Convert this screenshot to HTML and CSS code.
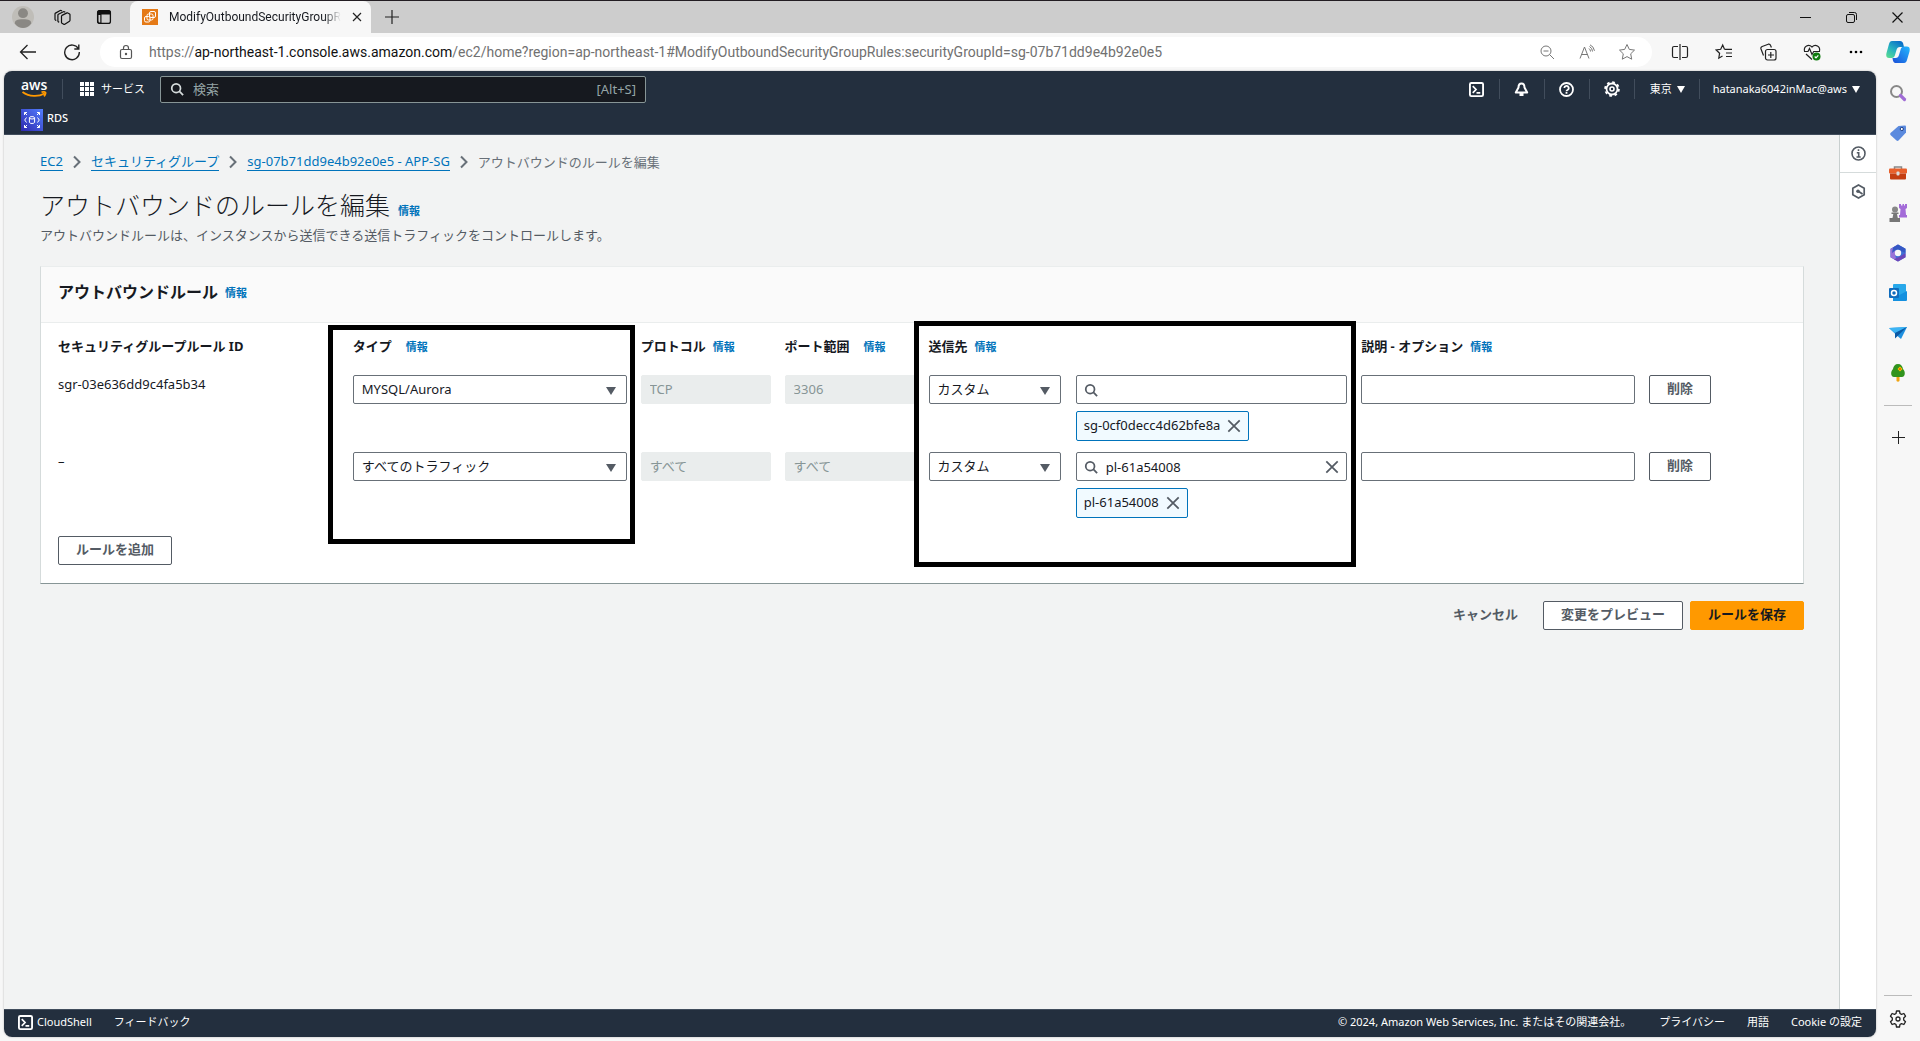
FILE: index.html
```html
<!DOCTYPE html>
<html lang="ja">
<head>
<meta charset="utf-8">
<title>ModifyOutboundSecurityGroupRules</title>
<link rel="stylesheet" href="styles.css">
</head>
<body>
<svg class="defs" aria-hidden="true">
  <symbol id="close" viewBox="0 0 16 16"><path d="M1.500 1.500l13 13M14.500 1.500l-13 13" fill="none" stroke="currentColor" stroke-width="2"/></symbol>
  <symbol id="search" viewBox="0 0 16 16"><circle cx="7" cy="7" r="5" fill="none" stroke="currentColor" stroke-width="2"/><path d="M10.500 10.500L15 15" stroke="currentColor" stroke-width="2"/></symbol>
  <symbol id="shell" viewBox="0 0 16 16"><rect x="1" y="1" width="14" height="14" rx="1.500" fill="none" stroke="currentColor" stroke-width="2"/><path d="M4 4.500l3.500 3.500L4 11.500M8 11.500h4" fill="none" stroke="currentColor" stroke-width="1.800"/></symbol>
  <symbol id="chevron" viewBox="0 0 10 14"><path d="M2 1.500L7.500 7 2 12.500" fill="none" stroke="currentColor" stroke-width="2"/></symbol>
</svg>
<div class="browser">
  <header class="tabstrip">
    <button class="ib avatar" aria-label="プロファイル"><svg width="22" height="22" viewBox="0 0 20 20"><circle cx="10" cy="10" r="10" fill="#bfbdb8"/><circle cx="10" cy="6.500" r="4.500" fill="#8a8884"/><path d="M2.500 16c0-3 2-4 7.500-4s7.500 1 7.500 4c-2 3-5 4-7.500 4s-5.500-1-7.500-4z" fill="#8a8884"/></svg></button>
    <button class="ib" aria-label="ワークスペース"><svg width="17" height="17" viewBox="0 0 17 17" fill="none" stroke="#111" stroke-width="1.200" stroke-linejoin="round"><path d="M7.500 7.300q0-.6.500-.9l5-2.500q.5-.2.900.1l1.700 1q.4.300.4.800v5.500q0 .6-.5.900l-4.700 3.100q-.6.300-1.100 0l-1.700-1q-.5-.3-.5-.9z"/><path d="M5.200 13.300l-.8-.4q-.5-.3-.5-.9V6.200q0-.6.500-.9l5-2.600q.5-.2.900 0l1 .6"/><path d="M2.300 11.500l-.8-.4q-.5-.3-.5-.9V5q0-.6.500-.9l4.700-2.600q.5-.2.900 0l1 .5"/></svg></button>
    <button class="ib" aria-label="タブ操作"><svg width="16" height="16" viewBox="0 0 16 16"><rect x="1.600" y="1.600" width="12.800" height="12.800" rx="2" fill="none" stroke="#111" stroke-width="1.300"/><path d="M1 4a3 3 0 0 1 3-3h8a3 3 0 0 1 3 3v1.500H5.500V15H4a3 3 0 0 1-3-3z" fill="#111"/><path d="M2.500 6h1.800v7.500H4a1.500 1.500 0 0 1-1.500-1.500z" fill="#ccc"/></svg></button>
    <div class="tab">
      <svg width="16" height="16" viewBox="0 0 16 16"><rect width="16" height="16" fill="#e57a17"/><g fill="none" stroke="#fff"><rect x="7.500" y="2.500" width="6" height="6" rx="1.500"/><rect x="5" y="5" width="6" height="6" rx="1.500"/><rect x="2.500" y="7.500" width="5.500" height="5.500" rx="1.500"/></g></svg>
      <span class="tab-title">ModifyOutboundSecurityGroupR</span>
      <button class="ib" aria-label="タブを閉じる"><svg width="10" height="10" viewBox="0 0 10 10"><path d="M1 1l8 8M9 1L1 9" stroke="#222" stroke-width="1.200"/></svg></button>
    </div>
    <button class="ib newtab" aria-label="新しいタブ"><svg width="14" height="14" viewBox="0 0 14 14"><path d="M7 0v14M0 7h14" stroke="#222" stroke-width="1.200"/></svg></button>
    <div class="winctl">
      <button class="ib" aria-label="最小化"><svg width="11" height="11" viewBox="0 0 11 11"><path d="M0 5.500h11" stroke="#111"/></svg></button>
      <button class="ib" aria-label="元に戻す"><svg width="11" height="11" viewBox="0 0 11 11" fill="none" stroke="#111"><rect x=".5" y="2.500" width="8" height="8" rx="1.500"/><path d="M3 .5h5.500a2 2 0 0 1 2 2V8"/></svg></button>
      <button class="ib" aria-label="閉じる"><svg width="11" height="11" viewBox="0 0 11 11"><path d="M.5.5l10 10M10.500.5l-10 10" stroke="#111" stroke-width="1.200"/></svg></button>
    </div>
  </header>
  <div class="toolbar">
    <button class="ib" aria-label="戻る"><svg width="18" height="16" viewBox="0 0 18 16"><path d="M17 8H1.500M8.500 1l-7 7 7 7" fill="none" stroke="#222" stroke-width="1.300"/></svg></button>
    <button class="ib" aria-label="更新"><svg width="18" height="18" viewBox="0 0 18 18" fill="none" stroke="#222" stroke-width="1.400"><path d="M15.500 6A7.300 7.300 0 1 0 16.300 9M15.800 1.500V6h-4.500"/></svg></button>
    <div class="address">
      <svg width="14" height="16" viewBox="0 0 14 16" fill="none" stroke="#555" stroke-width="1.200"><rect x="1.500" y="5.500" width="11" height="9" rx="1.500"/><path d="M4.500 5.500V4a2.500 2.500 0 0 1 5 0v1.500"/><circle cx="7" cy="10" r=".6" fill="#555"/></svg>
      <p class="url">https://<b>ap-northeast-1.console.aws.amazon.com</b>/ec2/home?region=ap-northeast-1#ModifyOutboundSecurityGroupRules:securityGroupId=sg-07b71dd9e4b92e0e5</p>
      <button class="ib" aria-label="縮小"><svg width="16" height="16" viewBox="0 0 16 16" fill="none" stroke="#777"><circle cx="7" cy="7" r="5"/><path d="M10.500 10.500l4.500 4.500M4.500 7h5" /></svg></button>
      <button class="ib" aria-label="音声で読み上げる"><svg width="17" height="16" viewBox="0 0 17 16" fill="none" stroke="#777"><path d="M1 14.500L5.500 3 10 14.500M2.500 10.500h6M10 4.500a4 4 0 0 1 1.500 3M10.500 2.500a6 6 0 0 1 3 5M11 .8a8 8 0 0 1 4.500 6"/></svg></button>
      <button class="ib" aria-label="お気に入りに追加"><svg width="18" height="18" viewBox="0 0 18 18" fill="none" stroke="#777"><path d="M9 1.500l2.300 4.900 5.200.7-3.800 3.700 1 5.400L9 13.600l-4.700 2.600 1-5.400L1.500 7.100l5.200-.7z"/></svg></button>
    </div>
    <div class="tools">
      <button class="ib" aria-label="画面を分割"><svg width="18" height="18" viewBox="0 0 18 18" fill="none" stroke="#222" stroke-width="1.200"><path d="M9 1v16M7 3.500H3a1.500 1.500 0 0 0-1.500 1.500v8A1.500 1.500 0 0 0 3 14.500h4M11 3.500h4a1.500 1.500 0 0 1 1.500 1.500v8a1.500 1.500 0 0 1-1.500 1.500h-4"/></svg></button>
      <button class="ib" aria-label="お気に入り"><svg width="18" height="18" viewBox="0 0 18 18" fill="none" stroke="#222" stroke-width="1.200"><path d="M9.500 6.300L7.700 2 5.700 6.300l-4.500.7 3.400 3.200-.8 5 3.700-2.200M9.500 6.300h7.500M11 10h6M11 13.500h6"/></svg></button>
      <button class="ib" aria-label="コレクション"><svg width="18" height="18" viewBox="0 0 18 18" fill="none" stroke="#222" stroke-width="1.200"><rect x="6.500" y="6.500" width="10.500" height="10.500" rx="2"/><path d="M11.800 9v6M9 12h6M4.500 12.500L2 6a2 2 0 0 1 1.200-2.500l6-2.300A2 2 0 0 1 11.600 2.500l.8 2"/></svg></button>
      <button class="ib" aria-label="ブラウザーのエッセンシャル"><svg width="18" height="18" viewBox="0 0 18 18" fill="none" stroke="#222" stroke-width="1.200"><path d="M1.500 8C.5 3.500 5.500.5 9 4c3.500-3.500 8.500-.5 7.500 4M1 8.500h4l1.500-3 2.500 6 1.700-3H17M3 11l6 5.500"/><circle cx="13.500" cy="13.500" r="4" fill="#107c10" stroke="none"/><path d="M11.700 13.500l1.300 1.300 2.300-2.500" stroke="#fff"/></svg></button>
      <button class="ib" aria-label="設定など"><svg width="14" height="4" viewBox="0 0 14 4"><circle cx="2" cy="2" r="1.300"/><circle cx="7" cy="2" r="1.300"/><circle cx="12" cy="2" r="1.300"/></svg></button>
    </div>
    <button class="ib copilot" aria-label="Copilot"><svg width="24" height="24" viewBox="0 0 24 24"><defs><linearGradient id="ca" x1="0" y1="1" x2=".7" y2="0"><stop stop-color="#5fe08b"/><stop offset=".5" stop-color="#27b3c0"/><stop offset="1" stop-color="#0a70c8"/></linearGradient><linearGradient id="cb" x1="0" y1="1" x2="1" y2="0"><stop stop-color="#1b4fd8"/><stop offset="1" stop-color="#22b8ff"/></linearGradient></defs><path d="M6 1h8c2 0 3 1 3.500 4l.5 2h-4c-2 0-3 1-3.500 3l-1.500 5c-.5 2-1.500 3-3.500 3H3c-3 0-3-3-2.500-5L3 4c.5-2 1.500-3 3-3z" fill="url(#ca)"/><path d="M18 23h-8c-2 0-3-1-3.500-5h3c2 0 3-1 3.500-3l1.500-5c.5-2 1.500-3.500 3.500-3.500h3c3 0 3 3 2.500 5L21 20c-.5 2-1.500 3-3 3z" fill="url(#cb)"/></svg></button>
  </div>
  <div class="body">
    <div class="frame">
      <header class="awsnav">
        <div class="navrow">
          <a class="logo" href="#" aria-label="AWS"><span>aws</span><svg width="27" height="7" viewBox="0 0 26 7" fill="none" stroke="#ff9900" stroke-width="1.800"><path d="M1 1c7 5 16 5 22 1.500M20 1.200c3-.7 4.500-.2 4 1.300-.2 1.200-.8 2-1.500 2.800"/></svg></a>
          <button class="services"><svg width="14" height="14" viewBox="0 0 14 14" fill="#fff"><path d="M0 0h4v4H0zM5 0h4v4H5zM10 0h4v4h-4zM0 5h4v4H0zM5 5h4v4H5zM10 5h4v4h-4zM0 10h4v4H0zM5 10h4v4H5zM10 10h4v4h-4z"/></svg>サービス</button>
          <label class="navsearch"><svg width="14" height="14"><use href="#search"/></svg><input type="text" placeholder="検索" aria-label="検索"><span>[Alt+S]</span></label>
          <div class="navright">
            <button class="ni" aria-label="CloudShell"><svg width="15" height="15"><use href="#shell"/></svg></button>
            <button class="ni" aria-label="通知"><svg width="15" height="15" viewBox="0 0 15 15" fill="none" stroke="#fff" stroke-width="2"><path d="M7.500 1.500c-2 0-3 1.500-3 4L1.800 10.500h11.400L10.500 5.500c0-2.500-1-4-3-4z" stroke-linejoin="round"/><path d="M5.500 12.500h4" stroke-width="3"/></svg></button>
            <button class="ni" aria-label="ヘルプ"><svg width="15" height="15" viewBox="0 0 15 15" fill="none" stroke="#fff" stroke-width="1.800"><circle cx="7.500" cy="7.500" r="6.500"/><path d="M5.300 6a2.200 2.200 0 1 1 3.200 2c-.7.400-1 .6-1 1.300M7.500 10v1.700"/></svg></button>
            <button class="ni" aria-label="設定"><svg width="16" height="16" viewBox="0 0 16 16" fill="none" stroke="#fff"><circle cx="8" cy="8" r="5.500" stroke-width="1.800"/><circle cx="8" cy="8" r="6.900" stroke-width="1.800" stroke-dasharray="2.700 2.720"/><circle cx="8" cy="8" r="2" stroke-width="1.600"/></svg></button>
            <button class="menu region">東京</button>
            <button class="menu user">hatanaka6042inMac@aws</button>
          </div>
        </div>
        <a class="rds" href="#"><svg width="22" height="22" viewBox="0 0 22 22"><defs><linearGradient id="rg" x1="0" y1="1" x2="1" y2="0"><stop stop-color="#2e27ad"/><stop offset="1" stop-color="#527fff"/></linearGradient></defs><rect width="22" height="22" fill="url(#rg)"/><g fill="none" stroke="#fff"><ellipse cx="11" cy="8.800" rx="2.600" ry="1.200"/><path d="M8.400 8.800v4.500c0 1.600 5.200 1.600 5.200 0V8.800M5.500 8.500l-1.800 2.500 1.800 2.500M16.500 8.500l1.800 2.500-1.800 2.500M3.500 6V3.500H6M3.500 3.500l2.500 2.500M18.500 6V3.500H16M18.500 3.500L16 6M3.500 16v2.500H6M3.500 18.500L6 16M18.500 16v2.500H16M18.500 18.500L16 16"/></g></svg><span>RDS</span></a>
      </header>
      <div class="page">
        <main>
          <nav class="crumbs"><a href="#">EC2</a><svg width="10" height="14"><use href="#chevron"/></svg><a href="#">セキュリティグループ</a><svg width="10" height="14"><use href="#chevron"/></svg><a href="#">sg-07b71dd9e4b92e0e5 - APP-SG</a><svg width="10" height="14"><use href="#chevron"/></svg><span>アウトバウンドのルールを編集</span></nav>
          <div class="title"><h1>アウトバウンドのルールを編集</h1><a class="info" href="#">情報</a></div>
          <p class="desc">アウトバウンドルールは、インスタンスから送信できる送信トラフィックをコントロールします。</p>
          <form class="card">
            <div class="cardhead"><h2>アウトバウンドルール</h2><a class="info" href="#">情報</a></div>
            <table class="rules">
              <thead>
                <tr>
                  <th>セキュリティグループルール ID</th>
                  <th class="wide marked mark-type">タイプ<a class="info" href="#">情報</a></th>
                  <th>プロトコル<a class="info" href="#">情報</a></th>
                  <th class="wide">ポート範囲<a class="info" href="#">情報</a></th>
                  <th class="marked mark-dest">送信先<a class="info" href="#">情報</a></th>
                  <th>説明 - オプション<a class="info" href="#">情報</a></th>
                  <th></th>
                </tr>
              </thead>
              <tbody>
                <tr>
                  <td class="id">sgr-03e636dd9c4fa5b34</td>
                  <td><span class="sel"><select aria-label="タイプ"><option>MYSQL/Aurora</option></select></span></td>
                  <td><input type="text" value="TCP" aria-label="プロトコル" disabled></td>
                  <td><input type="text" value="3306" aria-label="ポート範囲" disabled></td>
                  <td class="dest">
                    <span class="sel"><select aria-label="送信先"><option>カスタム</option></select></span>
                    <div class="pick">
                      <label class="find"><svg width="14" height="14"><use href="#search"/></svg><input type="text" aria-label="送信先を検索"></label>
                      <span class="token"><span>sg-0cf0decc4d62bfe8a</span><button type="button" class="ib" aria-label="削除"><svg width="14" height="14"><use href="#close"/></svg></button></span>
                    </div>
                  </td>
                  <td><input type="text" aria-label="説明"></td>
                  <td><button type="button" class="btn">削除</button></td>
                </tr>
                <tr>
                  <td class="id">–</td>
                  <td><span class="sel"><select aria-label="タイプ"><option>すべてのトラフィック</option></select></span></td>
                  <td><input type="text" value="すべて" aria-label="プロトコル" disabled></td>
                  <td><input type="text" value="すべて" aria-label="ポート範囲" disabled></td>
                  <td class="dest">
                    <span class="sel"><select aria-label="送信先"><option>カスタム</option></select></span>
                    <div class="pick">
                      <label class="find"><svg width="14" height="14"><use href="#search"/></svg><input type="text" value="pl-61a54008" aria-label="送信先を検索"><button type="button" class="ib" aria-label="クリア"><svg width="14" height="14"><use href="#close"/></svg></button></label>
                      <span class="token"><span>pl-61a54008</span><button type="button" class="ib" aria-label="削除"><svg width="14" height="14"><use href="#close"/></svg></button></span>
                    </div>
                  </td>
                  <td><input type="text" aria-label="説明"></td>
                  <td><button type="button" class="btn">削除</button></td>
                </tr>
              </tbody>
            </table>
            <button type="button" class="btn add">ルールを追加</button>
          </form>
          <div class="actions">
            <button class="btn link">キャンセル</button>
            <button class="btn">変更をプレビュー</button>
            <button class="btn primary">ルールを保存</button>
          </div>
        </main>
        <aside class="panel">
          <button class="ib" aria-label="情報パネル"><svg width="15" height="15" viewBox="0 0 15 15" fill="none" stroke="#545b64" stroke-width="1.600"><circle cx="7.500" cy="7.500" r="6.500"/><path d="M7.500 3.200v1.800M5.800 6.800h1.900v4M5.500 11h4.200"/></svg></button>
          <button class="ib" aria-label="診断"><svg width="15" height="15" viewBox="0 0 15 15" fill="none" stroke="#545b64" stroke-width="1.700"><path d="M7.500 1l5.700 3.200v6.600L7.500 14l-5.700-3.200V4.200z"/><circle cx="7" cy="7.200" r="1.800" fill="#545b64" stroke="none"/><path d="M7 7l4.500 3"/></svg></button>
        </aside>
      </div>
      <footer class="awsfoot">
        <a class="cs" href="#"><svg width="15" height="15"><use href="#shell"/></svg><span>CloudShell</span></a>
        <a href="#">フィードバック</a>
        <span class="copy">© 2024, Amazon Web Services, Inc. またはその関連会社。</span>
        <a href="#">プライバシー</a>
        <a href="#">用語</a>
        <a href="#">Cookie の設定</a>
      </footer>
    </div>
    <aside class="edge">
      <button class="ib" aria-label="検索"><svg width="18" height="18" viewBox="0 0 18 18"><circle cx="7.500" cy="7.500" r="5.500" fill="none" stroke="#888" stroke-width="2"/><path d="M11.500 11.500l4 4" stroke="#a06cd5" stroke-width="3.200" stroke-linecap="round"/></svg></button>
      <button class="ib" aria-label="ショッピング"><svg width="18" height="18" viewBox="0 0 18 18"><path d="M9.500 2L16 1.500q1 0 1 1V8.500l-7.500 8q-1 .8-2 0L1.500 11q-.8-1 0-2z" fill="#5b8ade"/><circle cx="12.800" cy="5" r="1.600" fill="#fff" stroke="#1d3f87"/></svg></button>
      <button class="ib" aria-label="ツール"><svg width="18" height="18" viewBox="0 0 18 18"><path d="M5.500 5V3h7v2" fill="none" stroke="#888" stroke-width="1.500"/><rect x="0" y="4.500" width="18" height="5" rx="1" fill="#e8602c"/><path d="M1 9.500h16v5q0 1-1 1H2q-1 0-1-1z" fill="#c43e12"/><rect x="7.500" y="7.500" width="3" height="4" rx="1" fill="#ddd"/></svg></button>
      <button class="ib" aria-label="ゲーム"><svg width="18" height="18" viewBox="0 0 18 18"><path d="M10 0h2v1.500h1.500V0h1.500v1.500h1V0h2v4l-1.500 1 .5 6h1v2.500h-8V11h1l.5-6L10 4z" fill="#a36bd8"/><circle cx="6" cy="5.500" r="3" fill="#888"/><path d="M2.500 8.500h7v1.500H8l.8 4h2.200v4H.5v-4h3l.8-4H2.500z" fill="#777"/></svg></button>
      <button class="ib" aria-label="Microsoft 365"><svg width="18" height="18" viewBox="0 0 18 18"><path d="M9 .5l7.500 4.300v8.400L9 17.500l-7.500-4.300V4.800z" fill="#3f6fd6"/><path d="M1.500 5L9 .5 6.500 6v7L9 17.500l-7.500-4.300z" fill="#9a72d8"/><path d="M9 .5L4 3.500 3 9l5-4 8.500 4V4.800z" fill="#3558c4"/><path d="M16.500 9v4.200L9 17.500l-4-2.300L12 12z" fill="#6c46b8"/><circle cx="9" cy="9" r="3.200" fill="#f7f7f7"/></svg></button>
      <button class="ib" aria-label="Outlook"><svg width="18" height="18" viewBox="0 0 18 18"><rect x="4" y="0" width="13" height="11" rx="1" fill="#28a8ea"/><path d="M4 17V7l6.500 4L18 7v9q0 1-1 1z" fill="#1490df"/><rect x="0" y="4" width="10" height="10" rx="1" fill="#0f6cbd"/><circle cx="5" cy="9" r="2.500" fill="none" stroke="#fff" stroke-width="1.500"/></svg></button>
      <button class="ib" aria-label="送信"><svg width="18" height="18" viewBox="0 0 18 18"><path d="M0 4l18-1-6 12-3.500-3z" fill="#1e90e0"/><path d="M0 4l18-1L6 9z" fill="#3cb4f4"/><path d="M18 3L6 9v5.500z" fill="#0c59a4"/></svg></button>
      <button class="ib" aria-label="ツリー"><svg width="18" height="18" viewBox="0 0 18 18"><path d="M7.500 12h3v5q-1.500 1.500-3 0z" fill="#f0a412"/><path d="M9 0c3 0 4.500 2 5 5 3 3 2 8-1 8H5c-3 0-4-5-1-8 .5-3 2-5 5-5z" fill="#31941e"/><path d="M11 2.500l2.500 2.500L11 7.500 8.500 5z" fill="#ffc400"/><circle cx="11" cy="5" r="1" fill="#e05a00"/></svg></button>
      <hr>
      <button class="ib" aria-label="追加"><svg width="13" height="13" viewBox="0 0 13 13"><path d="M6.500 0v13M0 6.500h13" stroke="#222"/></svg></button>
      <hr class="low">
      <button class="ib" aria-label="設定"><svg width="18" height="18" viewBox="0 0 18 18" fill="none" stroke="#222" stroke-width="1.300" stroke-linejoin="round"><path d="M7.500 1h3l.5 2.500 1.500.9 2.400-.9 1.600 2.700L14.700 8v2l1.800 1.700-1.600 2.800-2.400-.9-1.500.9-.5 2.500h-3L7 14.500l-1.500-.9-2.400.9-1.600-2.800L3.300 10V8L1.500 6.200l1.600-2.700 2.400.9L7 3.500z"/><circle cx="9" cy="9" r="2"/></svg></button>
    </aside>
  </div>
</div>
</body>
</html>
```
FILE: styles.css
```css
*, *::before, *::after { box-sizing: border-box; }
body { margin: 0; background: #f7f7f7; color: #16191f; font: 13px/18px "Noto Sans", "Noto Sans CJK JP", sans-serif; }
h1, h2, p { margin: 0; }
button, input, select { font: inherit; color: inherit; }
button { border: 0; background: none; padding: 0; cursor: pointer; }
a { color: #0073bb; text-decoration: none; }
svg { display: block; flex: none; }
.defs { position: absolute; width: 0; height: 0; }
.ib { display: flex; align-items: center; justify-content: center; flex: none; }
.browser { min-height: 100vh; display: flex; flex-direction: column; }

/* browser chrome */
.tabstrip { height: 33px; display: flex; align-items: center; background: #cdcdcd; border-top: 1px solid #221d22; }
.tabstrip > .ib { width: 42px; }
.tabstrip > .avatar { width: 41px; padding-left: 4px; }
.tabstrip .tab { width: 241px; height: 32px; margin-left: 5px; padding: 0 10px 0 12px; display: flex; align-items: center; gap: 11px; background: #f7f7f7; border-radius: 8px 8px 0 0; }
.tab-title { flex: 1; white-space: nowrap; font-family: Roboto, sans-serif; font-size: 12px; mask-image: linear-gradient(90deg, #000 90%, transparent); }
.tab .ib { width: 10px; }
.winctl { margin-left: auto; display: flex; }
.winctl .ib { width: 46px; height: 32px; }
.toolbar { height: 38px; display: flex; align-items: center; padding: 0 10px 0 6px; }
.toolbar > .ib { width: 44px; }
.toolbar > .copilot { width: 24px; margin-left: 8px; }
.address { flex: 1; height: 30px; margin-left: 6px; padding: 0 13px 0 19px; display: flex; align-items: center; gap: 16px; border-radius: 15px; background: #fff; }
.url { flex: 1; overflow: hidden; white-space: nowrap; font-family: Roboto, sans-serif; font-size: 14px; color: #717171; }
.url b { color: #111; font-weight: 400; }
.address .ib { width: 24px; }
.tools { display: flex; margin-left: 6px; }
.tools .ib { width: 44px; height: 30px; }
.body { flex: 1; display: flex; padding: 0 0 4px 4px; }
.frame { flex: 1; display: flex; flex-direction: column; border-radius: 8px; overflow: hidden; background: #f2f3f3; box-shadow: 0 0 2px #aaa; }
.edge { width: 44px; display: flex; flex-direction: column; align-items: center; padding-top: 13px; }
.edge .ib { height: 18px; margin-bottom: 22px; }
.edge hr { width: 28px; margin: 1px 0 22px; border: 0; border-top: 1px solid #bbb; }
.edge hr.low { margin: auto 0 14px; }
.edge .ib:last-child { margin-bottom: 9px; }

/* console navigation */
.awsnav { height: 64px; background: #232f3e; color: #fff; border-bottom: 1px solid #414d5c; }
.navrow { height: 36px; display: flex; align-items: center; }
.logo { width: 59px; height: 20px; padding-left: 17px; border-right: 1px solid #414d5c; color: #fff; font: 600 14px/12px "Open Sans", sans-serif; }
.logo span { display: block; }
.services { display: flex; align-items: center; gap: 7px; padding: 0 15px 0 17px; font-size: 11px; }
.navsearch { width: 486px; height: 27px; display: flex; align-items: center; gap: 9px; padding: 0 9px; background: #16191f; border: 1px solid #879596; border-radius: 2px; color: #d5dbdb; }
.navsearch input { flex: 1; min-width: 0; border: 0; padding: 0; background: none; outline: 0; }
.navsearch input::placeholder { color: #95a5a6; opacity: 1; }
.navsearch span { color: #95a5a6; }
.navright { margin-left: auto; display: flex; align-items: center; font-size: 11px; }
.ni { width: 45px; height: 20px; display: flex; align-items: center; justify-content: center; border-right: 1px solid #414d5c; }
.menu { display: flex; align-items: center; gap: 5px; height: 20px; padding: 0 16px 0 13px; }
.menu.region { border-right: 1px solid #414d5c; padding: 0 14px 0 15px; }
.menu::after, .sel::after { content: ""; width: 0; height: 0; border: solid transparent; border-width: 7px 4px 0; border-top-color: currentColor; }
.rds { display: inline-flex; gap: 4px; margin: 2px 17px 0; color: #fff; font-size: 11px; font-weight: 500; }

/* page */
.page { flex: 1; display: flex; }
main { flex: 1; padding: 18px 35px 0 36px; }
.panel { width: 37px; background: #fff; border-left: 1px solid #c8cfcf; }
.panel .ib { width: 100%; height: 38px; border-bottom: 1px solid #d5dbdb; }
.panel .ib + .ib { height: 36px; border: 0; }
.crumbs { display: flex; align-items: center; gap: 9px; color: #687078; }
.crumbs a { line-height: 17px; border-bottom: 1px solid #0073bb; }
.title { display: flex; align-items: baseline; gap: 8px; margin-top: 16px; }
h1 { font-size: 25px; line-height: 36px; font-weight: 300; }
.info { font-size: 11px; line-height: 20px; font-weight: 700; }
.desc { margin-top: 3px; color: #545b64; }
.card { margin-top: 22px; background: #fff; border: 1px solid #d5dbdb; border-top-color: #eaeded; border-bottom-color: #879596; padding-bottom: 18px; }
.cardhead { height: 56px; display: flex; align-items: center; gap: 7px; padding: 0 17px 5px; background: #fafafa; border-bottom: 1px solid #eaeded; }
.cardhead .info { line-height: 16px; padding-top: 2px; }
h2 { font-size: 16px; line-height: 24px; }
.rules { display: block; padding: 0 17px; }
.rules thead, .rules tbody { display: block; }
.rules tr { display: grid; grid-template-columns: 281fr 274fr 130fr 130fr 419fr 274fr 137fr; gap: 14px; }
.rules tbody tr { height: 77px; }
.rules th { height: 52px; padding: 14px 0 0; text-align: left; white-space: nowrap; display: flex; align-items: flex-start; gap: 7px; }
.rules th.wide { gap: 14px; }
.rules td { padding: 0; min-width: 0; }
.marked { position: relative; }
.marked::after { content: ""; position: absolute; border: 5px solid #000; pointer-events: none; z-index: 1; }
.mark-type::after { left: -25px; right: -8px; top: 2px; height: 219px; }
.mark-dest::after { left: -15px; right: -9px; top: -2px; height: 246px; }
.sel { position: relative; display: block; }
.sel::after { position: absolute; right: 11px; top: 12px; border-width: 8px 5px 0; color: #545b64; pointer-events: none; }
select, .rules td > input, .find { width: 100%; height: 29px; border: 1px solid #687078; border-radius: 2px; background: #fff; padding: 0 8px 2px; outline: 0; appearance: none; display: block; }
.rules td > input:disabled { background: #eaeded; border-color: #eaeded; color: #879596; }
.dest { display: grid; grid-template-columns: 132fr 271fr; gap: 15px; }
.find { display: flex; align-items: center; gap: 8px; padding: 0 7px; color: #545b64; }
.find input { flex: 1; min-width: 0; border: 0; padding: 0; outline: 0; color: #16191f; background: none; }
.token { display: inline-flex; height: 30px; margin-top: 7px; padding: 0 7px; align-items: center; gap: 7px; border: 1px solid #0073bb; border-radius: 2px; background: #f1faff; }
.token span { padding-bottom: 3px; }
.token .ib { color: #545b64; }
.btn { height: 29px; padding: 0 17px 3px; border: 1px solid #545b64; border-radius: 2px; background: #fff; color: #545b64; font-weight: 700; white-space: nowrap; }
.add { display: block; margin: 7px 17px 0; }
.actions { display: flex; justify-content: flex-end; gap: 7px; margin-top: 17px; }
.link { background: none; border-color: transparent; }
.primary { background: #ff9900; border-color: #ff9900; color: #16191f; }

.awsfoot { height: 28px; display: flex; align-items: center; gap: 22px; padding: 0 14px 3px; background: #232f3e; border-top: 1px solid #414d5c; font-size: 11px; color: #fff; }
.awsfoot a { color: #fff; }
.cs { display: flex; align-items: center; gap: 4px; }
.copy { margin-left: auto; margin-right: 6px; }
```
